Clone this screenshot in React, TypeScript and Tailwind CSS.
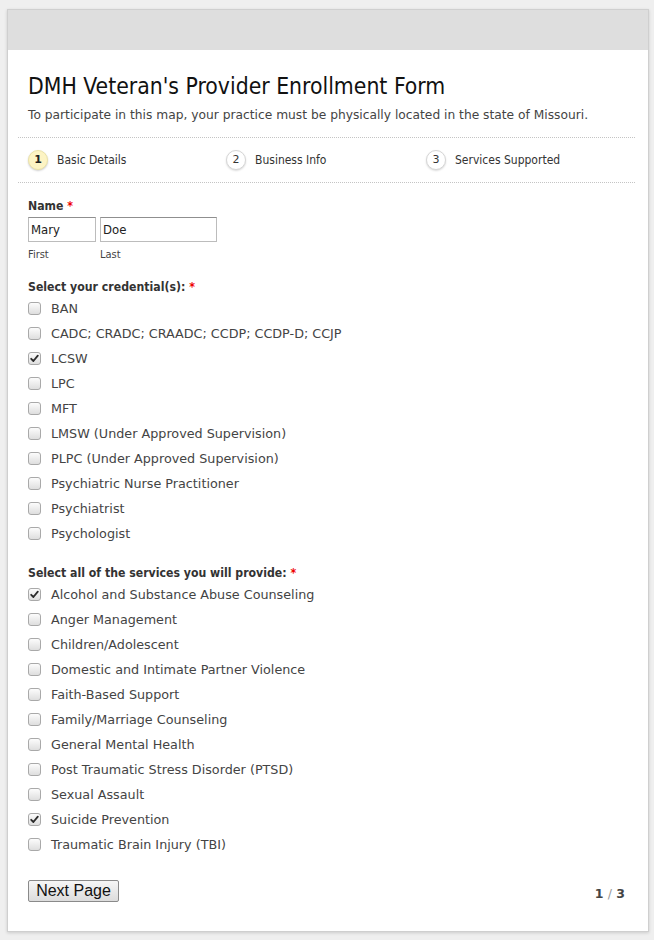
const credentials = [
  { label: "BAN", checked: false },
  { label: "CADC; CRADC; CRAADC; CCDP; CCDP-D; CCJP", checked: false },
  { label: "LCSW", checked: true },
  { label: "LPC", checked: false },
  { label: "MFT", checked: false },
  { label: "LMSW (Under Approved Supervision)", checked: false },
  { label: "PLPC (Under Approved Supervision)", checked: false },
  { label: "Psychiatric Nurse Practitioner", checked: false },
  { label: "Psychiatrist", checked: false },
  { label: "Psychologist", checked: false },
];

const services = [
  { label: "Alcohol and Substance Abuse Counseling", checked: true },
  { label: "Anger Management", checked: false },
  { label: "Children/Adolescent", checked: false },
  { label: "Domestic and Intimate Partner Violence", checked: false },
  { label: "Faith-Based Support", checked: false },
  { label: "Family/Marriage Counseling", checked: false },
  { label: "General Mental Health", checked: false },
  { label: "Post Traumatic Stress Disorder (PTSD)", checked: false },
  { label: "Sexual Assault", checked: false },
  { label: "Suicide Prevention", checked: true },
  { label: "Traumatic Brain Injury (TBI)", checked: false },
];

function Box({ checked }: { checked: boolean }) {
  return (
    <span className="relative flex h-[13px] w-[13px] shrink-0 items-center justify-center rounded-[3px] border border-[#a9a9a9] bg-gradient-to-b from-[#fcfcfc] to-[#dedede]">
      {checked && (
        <svg width="9" height="9" viewBox="0 0 9 9" className="absolute">
          <path d="M1.2 4.8 L3.4 7 L7.8 1.6" fill="none" stroke="#2b2b2b" strokeWidth="1.8" strokeLinecap="round" strokeLinejoin="round" />
        </svg>
      )}
    </span>
  );
}

function Row({ label, checked }: { label: string; checked: boolean }) {
  return (
    <div className="flex h-[25px] items-center gap-[10px]">
      <Box checked={checked} />
      <span className="text-[12.75px] leading-[25px] text-[#444]">{label}</span>
    </div>
  );
}

function Label({ text }: { text: string }) {
  return (
    <div className="text-[12.2px] font-bold leading-[18px] text-[#333] font-['DejaVu_Sans_Condensed',sans-serif]">
      {text} <span className="text-[#e00]">*</span>
    </div>
  );
}

function Step({ n, label, active }: { n: number; label: string; active?: boolean }) {
  return (
    <div className="flex items-center gap-[9px]">
      <span
        className={
          active
            ? "flex h-[20px] w-[20px] items-center justify-center rounded-full border border-[#ece3a8] bg-[#fdf4c4] text-[11px] font-bold text-[#222] shadow-[0_1px_2px_rgba(0,0,0,0.2)]"
            : "flex h-[20px] w-[20px] items-center justify-center rounded-full border border-[#d6d6d6] bg-white text-[11px] text-[#333] shadow-[0_1px_2px_rgba(0,0,0,0.15)]"
        }
      >
        {n}
      </span>
      <span className="text-[12px] leading-[20px] text-[#333] font-['DejaVu_Sans_Condensed',sans-serif]">{label}</span>
    </div>
  );
}

export default function App() {
  return (
    <div className="min-h-[940px] bg-[#efefef] pl-[7px] pr-[5px] pt-[9px] font-['DejaVu_Sans',sans-serif]">
      <div className="w-[642px] border border-[#cfcfcf] bg-white shadow-[0_1px_3px_rgba(0,0,0,0.15)]">
        <div className="h-[40px] bg-[#dedede]" />
        <div className="pl-[10px] pr-[13px]">
          <div className="pl-[10px] pt-[22px] pb-[13px]">
            <h1 className="text-[22.75px] leading-[28px] text-[#111] font-['DejaVu_Sans_Condensed',sans-serif]">
              DMH Veteran's Provider Enrollment Form
            </h1>
            <p className="mt-[6px] text-[12.25px] leading-[18px] text-[#444]">
              To participate in this map, your practice must be physically located in the state of Missouri.
            </p>
          </div>
          <div className="flex border-y border-dotted border-[#c4c4c4] px-[10px] py-[12px]">
            <div className="w-[198px]">
              <Step n={1} label="Basic Details" active />
            </div>
            <div className="w-[200px]">
              <Step n={2} label="Business Info" />
            </div>
            <div>
              <Step n={3} label="Services Supported" />
            </div>
          </div>
          <div className="px-[10px] pt-[14px] pb-[27px]">
            <div className="text-[12.2px] font-bold leading-[18px] text-[#333] font-['DejaVu_Sans_Condensed',sans-serif]">
              Name <span className="text-[#e00]">*</span>
            </div>
            <div className="mt-[2px] flex gap-[4px]">
              <div className="flex flex-col">
                <div className="flex h-[25px] w-[68px] items-center border border-[#bcbcbc] border-t-[#8f8f8f] px-[2px] text-[13px] text-[#222] font-['DejaVu_Sans_Condensed',sans-serif]">
                  Mary
                </div>
                <span className="mt-[5px] text-[11px] leading-[16px] text-[#444] font-['DejaVu_Sans_Condensed',sans-serif]">First</span>
              </div>
              <div className="flex flex-col">
                <div className="flex h-[25px] w-[117px] items-center border border-[#bcbcbc] border-t-[#8f8f8f] px-[2px] text-[13px] text-[#222] font-['DejaVu_Sans_Condensed',sans-serif]">
                  Doe
                </div>
                <span className="mt-[5px] text-[11px] leading-[16px] text-[#444] font-['DejaVu_Sans_Condensed',sans-serif]">Last</span>
              </div>
            </div>
            <div className="mt-[15px]">
              <Label text="Select your credential(s):" />
              {credentials.map((c) => (
                <Row key={c.label} {...c} />
              ))}
            </div>
            <div className="mt-[18px]">
              <Label text="Select all of the services you will provide:" />
              {services.map((c) => (
                <Row key={c.label} {...c} />
              ))}
            </div>
            <div className="mt-[22px] flex items-center justify-between">
              <button className="h-[22px] w-[91px] rounded-[2px] border border-[#8a8a8a] bg-gradient-to-b from-[#f6f6f6] to-[#dcdcdc] text-[16px] leading-[20px] text-[#111] font-['Liberation_Sans',sans-serif]">
                Next Page
              </button>
              <span className="mt-[6px] text-[12.5px] font-bold text-[#444]">
                1 <span className="font-normal text-[#999]">/</span> 3
              </span>
            </div>
          </div>
        </div>
      </div>
    </div>
  );
}
